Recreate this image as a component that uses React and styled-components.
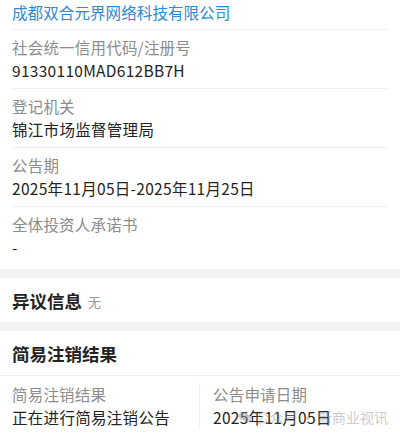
import React from "react";
import styled, { createGlobalStyle } from "styled-components";

const Global = createGlobalStyle`
  html, body { margin: 0; padding: 0; background: #fff; }
  body { font-family: "Noto Sans CJK SC", "Noto Sans", sans-serif; width: 400px; height: 436px; overflow: hidden; }
`;

const Page = styled.div`
  position: relative;
  width: 400px;
  background: #fff;
`;

const Card = styled.div`
  padding: 0 12px;
`;

const Title = styled.div`
  font-size: 15.5px;
  line-height: 23px;
  letter-spacing: 0.1px;
  color: #2d88d7;
  padding: 1px 0 5px;
  border-bottom: 1px solid #efefef;
`;

const Row = styled.div`
  padding: ${(p) => (p.$last ? "6px 0 10px" : "6px 0 6px")};
  border-bottom: ${(p) => (p.$last ? "none" : "1px solid #efefef")};
`;

const Label = styled.div`
  font-size: 15.5px;
  line-height: 23px;
  letter-spacing: 0.2px;
  color: #8c8c8c;
  white-space: nowrap;
`;

const Value = styled.div`
  font-size: 15.5px;
  line-height: 23px;
  letter-spacing: 0.3px;
  color: #232323;
  white-space: nowrap;
`;

const Band = styled.div`
  height: 9px;
  background: #f2f2f2;
`;

const SectionHead = styled.div`
  display: flex;
  gap: 6px;
  height: 44px;
  align-items: center;
  padding: 0 12px;
  border-bottom: ${(p) => (p.$divider ? "1px solid #efefef" : "none")};
`;

const HeadText = styled.span`
  font-size: 17.5px;
  font-weight: 700;
  color: #222;
`;

const HeadNote = styled.span`
  font-size: 13px;
  color: #999;
  margin-top: 2px;
`;

const Cols = styled.div`
  display: grid;
  grid-template-columns: 199px 1fr;
  padding: 7px 0 6px;
`;

const Col = styled.div`
  padding-left: ${(p) => (p.$right ? "13px" : "12px")};
  border-left: ${(p) => (p.$right ? "1px solid #efefef" : "none")};
`;

const Watermark = styled.div`
  position: absolute;
  right: 12px;
  bottom: 8px;
  display: flex;
  align-items: center;
  gap: 4px;
  font-size: 14px;
  color: rgba(150, 150, 150, 0.5);
  pointer-events: none;
`;

export default function App() {
  return (
    <Page>
      <Global />
      <Card>
        <Title>成都双合元界网络科技有限公司</Title>
        <Row>
          <Label>社会统一信用代码/注册号</Label>
          <Value>91330110MAD612BB7H</Value>
        </Row>
        <Row>
          <Label>登记机关</Label>
          <Value>锦江市场监督管理局</Value>
        </Row>
        <Row>
          <Label>公告期</Label>
          <Value>2025年11月05日-2025年11月25日</Value>
        </Row>
        <Row $last>
          <Label>全体投资人承诺书</Label>
          <Value>-</Value>
        </Row>
      </Card>
      <Band />
      <SectionHead>
        <HeadText>异议信息</HeadText>
        <HeadNote>无</HeadNote>
      </SectionHead>
      <Band />
      <SectionHead $divider>
        <HeadText>简易注销结果</HeadText>
      </SectionHead>
      <Cols>
        <Col>
          <Label>简易注销结果</Label>
          <Value>正在进行简易注销公告</Value>
        </Col>
        <Col $right>
          <Label>公告申请日期</Label>
          <Value>2025年11月05日</Value>
        </Col>
      </Cols>
      <Watermark>
        <svg width="14" height="12" viewBox="0 0 14 12">
          <ellipse cx="5.5" cy="5" rx="5" ry="4.2" fill="rgba(150,150,150,0.45)" />
          <ellipse cx="9.5" cy="7.5" rx="4" ry="3.4" fill="rgba(150,150,150,0.4)" />
        </svg>
        <span>公众号 · 新商业视讯</span>
      </Watermark>
    </Page>
  );
}
